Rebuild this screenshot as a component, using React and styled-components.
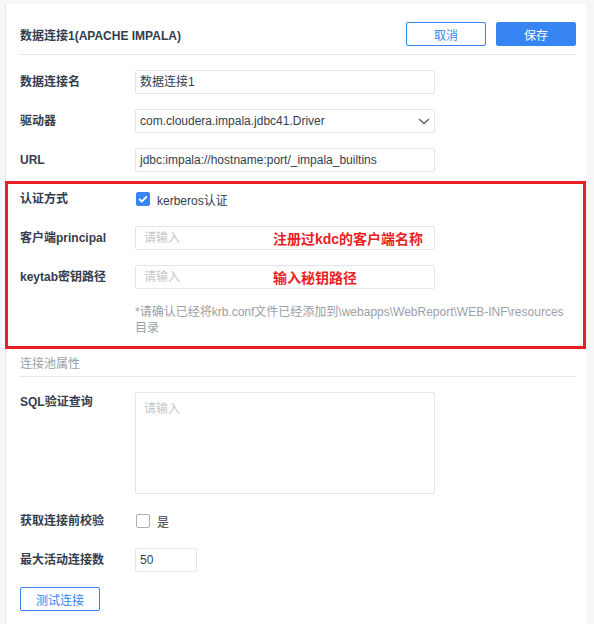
import React from "react";
import styled, { createGlobalStyle } from "styled-components";

const Global = createGlobalStyle`
  html, body {
    margin: 0;
    background: #f6f7f9;
    font-family: "Liberation Sans", "Noto Sans CJK SC", sans-serif;
    font-size: 12px;
    color: #333d4d;
  }
`;

const Page = styled.div`
  padding: 4px 8px 0 5px;
  height: 620px;
  overflow: hidden;
`;

const Panel = styled.div`
  background: #fff;
  border-left: 1px solid #e6e8eb;
  height: 620px;
  padding: 0 10px 0 14px;
`;

const Header = styled.div`
  display: flex;
  align-items: center;
  padding: 18px 0 8px;
  border-bottom: 1px solid #e3e5e8;
`;

const Title = styled.div`
  flex: 1;
  font-weight: 700;
  color: #333d4d;
`;

const Button = styled.button`
  width: 80px;
  height: 24px;
  border-radius: 2px;
  font-family: inherit;
  font-size: 12px;
  border: 1px solid #3685f2;
  background: ${(p) => (p.$primary ? "#3685f2" : "#fff")};
  color: ${(p) => (p.$primary ? "#fff" : "#3685f2")};
  padding: 0;
  margin-left: ${(p) => p.$gap || 0}px;
`;

const Form = styled.div`
  display: flex;
  flex-direction: column;
  gap: 15px;
  padding-top: 15px;
`;

const Row = styled.div`
  display: flex;
  align-items: ${(p) => (p.$top ? "flex-start" : "center")};
  min-height: 24px;
`;

const Label = styled.div`
  width: 115px;
  flex: none;
  font-weight: 700;
  color: #333d4d;
  line-height: ${(p) => (p.$top ? "20px" : "24px")};
`;

const FieldWrap = styled.div`
  position: relative;
  width: ${(p) => p.$w || 300}px;
`;

const Field = styled.div`
  box-sizing: border-box;
  width: 100%;
  height: ${(p) => p.$h || 24}px;
  border: 1px solid #e3e5e8;
  border-radius: 2px;
  padding: ${(p) => (p.$placeholder ? "0 8px" : "0 4px")};
  padding-top: ${(p) => (p.$h ? "8px" : 0)};
  display: flex;
  align-items: ${(p) => (p.$h ? "flex-start" : "center")};
  justify-content: space-between;
  color: ${(p) => (p.$placeholder ? "#c2c6cc" : "#333d4d")};
  line-height: 16px;
`;

const Note = styled.div`
  position: absolute;
  left: 138px;
  top: 50%;
  transform: translateY(-50%);
  color: #ea1f26;
  font-weight: 700;
  font-size: 14px;
  white-space: nowrap;
`;

const Annotated = styled.div`
  position: relative;
  display: flex;
  flex-direction: column;
  gap: 15px;
  &::after {
    content: "";
    position: absolute;
    left: -15px;
    right: -10px;
    top: -6px;
    bottom: -13px;
    border: 3px solid #ea1f26;
    pointer-events: none;
  }
`;

const Hint = styled.div`
  padding-left: 115px;
  color: #9aa0a8;
  line-height: 16px;
  padding-right: 8px;
`;

const Check = styled.span`
  box-sizing: border-box;
  width: 14px;
  height: 14px;
  margin-left: 1px;
  border-radius: 2px;
  border: 1px solid ${(p) => (p.$on ? "#3685f2" : "#a9b0ba")};
  background: ${(p) => (p.$on ? "#3685f2" : "#fff")};
  display: inline-flex;
  align-items: center;
  justify-content: center;
  margin-right: 7px;
`;

const CheckText = styled.span`
  color: #333d4d;
`;

const Section = styled.div`
  margin-top: 20px;
  color: #9aa0a8;
  line-height: 16px;
  padding-bottom: 4px;
  border-bottom: 1px solid #e3e5e8;
`;

const Chevron = () => (
  <svg width="12" height="7" viewBox="0 0 12 7">
    <polyline points="1,1 6,5.5 11,1" fill="none" stroke="#5b6472" strokeWidth="1.4" />
  </svg>
);

const Tick = () => (
  <svg width="10" height="8" viewBox="0 0 10 8">
    <polyline points="1.2,4 3.8,6.5 8.8,1.5" fill="none" stroke="#fff" strokeWidth="1.8" />
  </svg>
);

export default function App() {
  return (
    <>
      <Global />
      <Page>
        <Panel>
          <Header>
            <Title>数据连接1(APACHE IMPALA)</Title>
            <Button>取消</Button>
            <Button $primary $gap={10}>保存</Button>
          </Header>
          <Form>
            <Row>
              <Label>数据连接名</Label>
              <FieldWrap><Field>数据连接1</Field></FieldWrap>
            </Row>
            <Row>
              <Label>驱动器</Label>
              <FieldWrap>
                <Field>
                  com.cloudera.impala.jdbc41.Driver
                  <Chevron />
                </Field>
              </FieldWrap>
            </Row>
            <Row>
              <Label>URL</Label>
              <FieldWrap><Field>jdbc:impala://hostname:port/_impala_builtins</Field></FieldWrap>
            </Row>
            <Annotated>
              <Row>
                <Label>认证方式</Label>
                <Check $on><Tick /></Check>
                <CheckText>kerberos认证</CheckText>
              </Row>
              <Row>
                <Label>客户端principal</Label>
                <FieldWrap>
                  <Field $placeholder>请输入</Field>
                  <Note>注册过kdc的客户端名称</Note>
                </FieldWrap>
              </Row>
              <Row>
                <Label>keytab密钥路径</Label>
                <FieldWrap>
                  <Field $placeholder>请输入</Field>
                  <Note>输入秘钥路径</Note>
                </FieldWrap>
              </Row>
              <Hint>*请确认已经将krb.conf文件已经添加到\webapps\WebReport\WEB-INF\resources目录</Hint>
            </Annotated>
          </Form>
          <Section>连接池属性</Section>
          <Form>
            <Row $top>
              <Label $top>SQL验证查询</Label>
              <FieldWrap><Field $placeholder $h={102}>请输入</Field></FieldWrap>
            </Row>
            <Row>
              <Label>获取连接前校验</Label>
              <Check />
              <CheckText>是</CheckText>
            </Row>
            <Row>
              <Label>最大活动连接数</Label>
              <FieldWrap $w={62}><Field>50</Field></FieldWrap>
            </Row>
            <Row>
              <Button>测试连接</Button>
            </Row>
          </Form>
        </Panel>
      </Page>
    </>
  );
}
